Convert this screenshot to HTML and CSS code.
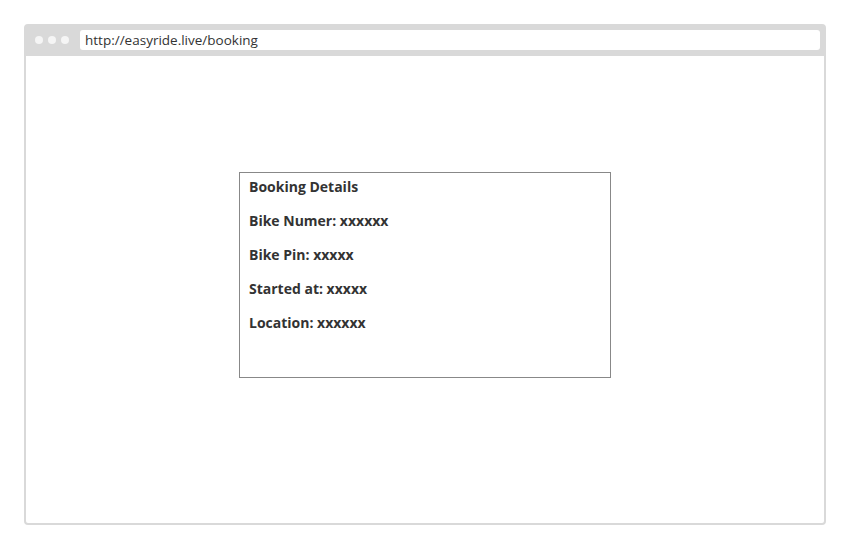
FILE: index.html
```html
<!DOCTYPE html>
<html>
<head>
<meta charset="utf-8">
<link rel="stylesheet" href="styles.css">
</head>
<body>
<div class="page">
  <div class="window">
    <div class="topbar">
      <div class="dots"><span class="dot"></span><span class="dot"></span><span class="dot"></span></div>
      <div class="address">http://easyride.live/booking</div>
    </div>
    <div class="content">
      <div class="card">
        <p>Booking Details</p>
        <p>Bike Numer: xxxxxx</p>
        <p>Bike Pin: xxxxx</p>
        <p>Started at: xxxxx</p>
        <p>Location: xxxxxx</p>
      </div>
    </div>
  </div>
</div>
</body>
</html>
```
FILE: styles.css
```css
html, body {
  margin: 0;
  padding: 0;
  background: #ffffff;
}
.page {
  padding: 24px;
  width: 850px;
  height: 550px;
  box-sizing: border-box;
}
.window {
  width: 802px;
  height: 501px;
  box-sizing: border-box;
  border: 2px solid #d9d9d9;
  border-radius: 4px;
  display: flex;
  flex-direction: column;
}
.topbar {
  height: 30px;
  background: #d9d9d9;
  display: flex;
  align-items: flex-start;
  padding-top: 4px;
  box-sizing: border-box;
}
.dots {
  display: flex;
  gap: 5px;
  padding-left: 9px;
  padding-top: 6px;
  width: 45px;
  box-sizing: border-box;
  flex-shrink: 0;
}
.dot {
  width: 8px;
  height: 8px;
  border-radius: 50%;
  background: #f5f5f5;
}
.address {
  margin-left: 9px;
  width: 740px;
  height: 20px;
  background: #ffffff;
  border-radius: 3px;
  font-family: "Open Sans", sans-serif;
  font-size: 13.5px;
  line-height: 20px;
  color: #333333;
  padding-left: 5px;
  box-sizing: border-box;
}
.content {
  flex: 1;
  display: flex;
  justify-content: center;
  align-items: flex-start;
  padding-top: 116px;
}
.card {
  width: 372px;
  height: 206px;
  box-sizing: border-box;
  border: 1px solid #888888;
  padding: 4px 9px 0;
  display: flex;
  flex-direction: column;
  gap: 14px;
}
.card p {
  margin: 0;
  font-family: "Open Sans", sans-serif;
  font-weight: 700;
  font-size: 14px;
  line-height: 20px;
  color: #333333;
}
```
